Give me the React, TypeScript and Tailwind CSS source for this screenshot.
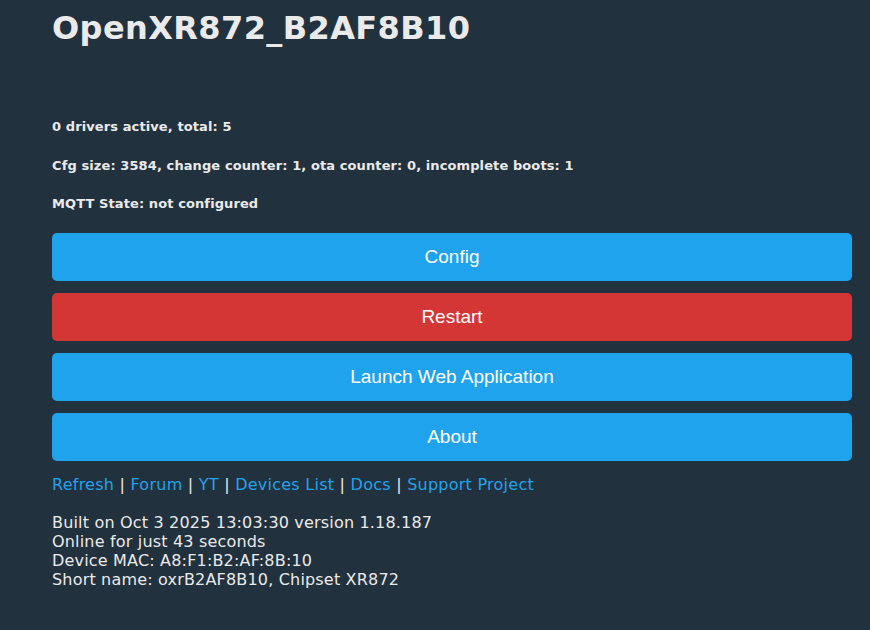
export default function App() {
  const buttons = [
    { label: "Config", cls: "bg-[#1fa3ec]" },
    { label: "Restart", cls: "bg-[#d43535]" },
    { label: "Launch Web Application", cls: "bg-[#1fa3ec]" },
    { label: "About", cls: "bg-[#1fa3ec]" },
  ];
  const links = ["Refresh", "Forum", "YT", "Devices List", "Docs", "Support Project"];

  return (
    <div className="min-h-[630px] w-full bg-[#22313e] text-[#eaeaea] font-['DejaVu_Sans',Verdana,sans-serif]">
      <div className="px-[52px] pt-[8px] w-[904px]">
        <h1 className="text-[32px] font-bold leading-[40px] tracking-[0.4px]">OpenXR872_B2AF8B10</h1>

        <div className="mt-[71px] flex flex-col gap-[22.5px] text-[13px] font-bold leading-[16px] tracking-[0.1px]">
          <div>0 drivers active, total: 5</div>
          <div>Cfg size: 3584, change counter: 1, ota counter: 0, incomplete boots: 1</div>
          <div>MQTT State: not configured</div>
        </div>

        <div className="mt-[21px] w-[800px] flex flex-col gap-[12px]">
          {buttons.map((b) => (
            <button
              key={b.label}
              className={`h-[48px] w-full rounded-[5px] ${b.cls} text-white text-[19px] font-['Liberation_Sans',Arial,sans-serif]`}
            >
              {b.label}
            </button>
          ))}
        </div>

        <div className="mt-[14px] text-[16px] leading-[20px] tracking-[0.25px]">
          {links.map((l, i) => (
            <span key={l}>
              {i > 0 && <span className="text-[#eaeaea]"> | </span>}
              <a className="text-[#1fa3ec]">{l}</a>
            </span>
          ))}
        </div>

        <div className="mt-[18px] text-[16px] leading-[19px] tracking-[0.18px]">
          <div>Built on Oct 3 2025 13:03:30 version 1.18.187</div>
          <div>Online for just 43 seconds</div>
          <div>Device MAC: A8:F1:B2:AF:8B:10</div>
          <div>Short name: oxrB2AF8B10, Chipset XR872</div>
        </div>
      </div>
    </div>
  );
}
